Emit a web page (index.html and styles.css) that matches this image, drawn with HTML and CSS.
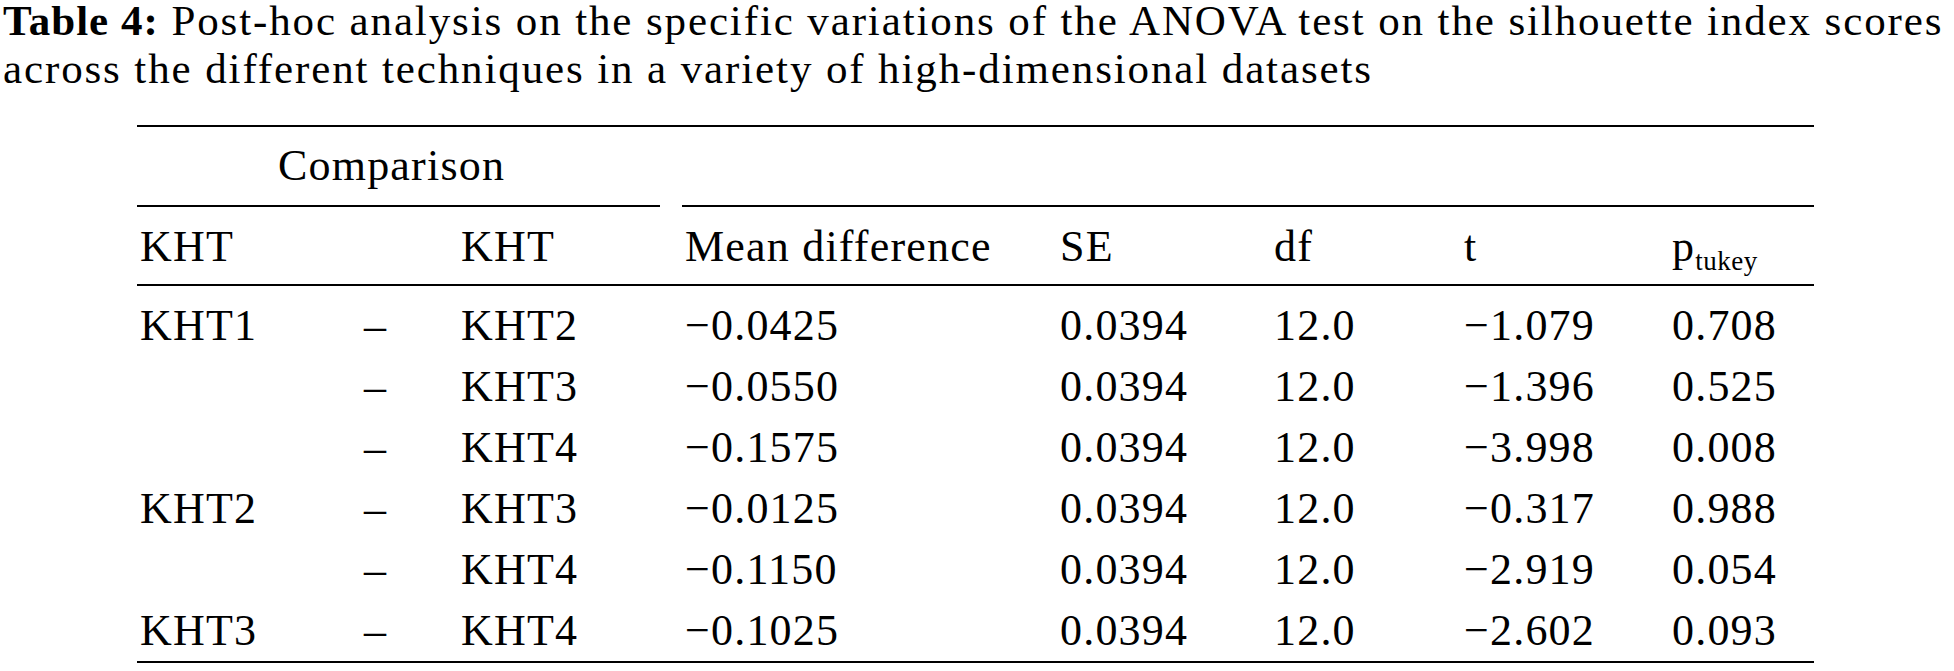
FILE: index.html
```html
<!DOCTYPE html>
<html lang="en">
<head>
<meta charset="utf-8">
<title>Table 4</title>
<link rel="stylesheet" href="styles.css">
</head>
<body>
<div class="page">
  <p class="caption"><b>Table 4:</b> Post-hoc analysis on the specific variations of the ANOVA test on the silhouette index scores across the different techniques in a variety of high-dimensional datasets</p>
  <div class="tbl">
    <div class="cmp">Comparison</div>
    <div class="rule-l"></div>
    <div class="rule-r"></div>

    <div class="th c1">KHT</div>
    <div class="th"></div>
    <div class="th">KHT</div>
    <div class="th">Mean difference</div>
    <div class="th">SE</div>
    <div class="th">df</div>
    <div class="th">t</div>
    <div class="th">p<span class="sub">tukey</span></div>

    <div class="td c1 first">KHT1</div><div class="td first dash">–</div><div class="td first">KHT2</div><div class="td first">−0.0425</div><div class="td first">0.0394</div><div class="td first">12.0</div><div class="td first">−1.079</div><div class="td first">0.708</div>

    <div class="td c1"></div><div class="td dash">–</div><div class="td">KHT3</div><div class="td">−0.0550</div><div class="td">0.0394</div><div class="td">12.0</div><div class="td">−1.396</div><div class="td">0.525</div>

    <div class="td c1"></div><div class="td dash">–</div><div class="td">KHT4</div><div class="td">−0.1575</div><div class="td">0.0394</div><div class="td">12.0</div><div class="td">−3.998</div><div class="td">0.008</div>

    <div class="td c1">KHT2</div><div class="td dash">–</div><div class="td">KHT3</div><div class="td">−0.0125</div><div class="td">0.0394</div><div class="td">12.0</div><div class="td">−0.317</div><div class="td">0.988</div>

    <div class="td c1"></div><div class="td dash">–</div><div class="td">KHT4</div><div class="td">−0.1150</div><div class="td">0.0394</div><div class="td">12.0</div><div class="td">−2.919</div><div class="td">0.054</div>

    <div class="td c1 last">KHT3</div><div class="td last dash">–</div><div class="td last">KHT4</div><div class="td last">−0.1025</div><div class="td last">0.0394</div><div class="td last">12.0</div><div class="td last">−2.602</div><div class="td last">0.093</div>
  </div>
</div>
</body>
</html>
```

FILE: styles.css
```css
html, body {
  margin: 0;
  padding: 0;
  background: #ffffff;
}

body {
  font-family: "Liberation Serif", "Times New Roman", serif;
  color: #000000;
}

.page {
  width: 1954px;
  height: 671px;
  overflow: hidden;
}

.caption {
  margin: -3px 0 0 0;
  padding-left: 3px;
  font-size: 43px;
  line-height: 48px;
  letter-spacing: 1.88px;
}

.caption b {
  font-weight: bold;
  letter-spacing: 1px;
}

.tbl {
  margin: 32px 0 0 137px;
  width: 1677px;
  display: grid;
  grid-template-columns: 227px 97px 224px 375px 214px 190px 208px 142px;
  border-top: 2px solid #000;
  border-bottom: 2px solid #000;
  font-size: 44px;
  letter-spacing: 1.2px;
}

.cmp {
  grid-column: 1 / 4;
  height: 78px;
  line-height: 78px;
  padding-left: 141px;
  white-space: nowrap;
}

.rule-l {
  grid-column: 1 / 4;
  height: 2px;
  background: #000;
  margin-right: 25px;
}

.rule-r {
  grid-column: 4 / 9;
  height: 2px;
  background: #000;
  margin-left: -3px;
}

.th {
  padding-top: 3px;
  line-height: 74px;
  border-bottom: 2px solid #000;
  white-space: nowrap;
}

.td {
  line-height: 61px;
  white-space: nowrap;
}

.c1 {
  padding-left: 3px;
}

.first {
  padding-top: 9px;
}

.sub {
  font-size: 27px;
  letter-spacing: 0.5px;
  vertical-align: -9px;
  line-height: 0;
}
```
